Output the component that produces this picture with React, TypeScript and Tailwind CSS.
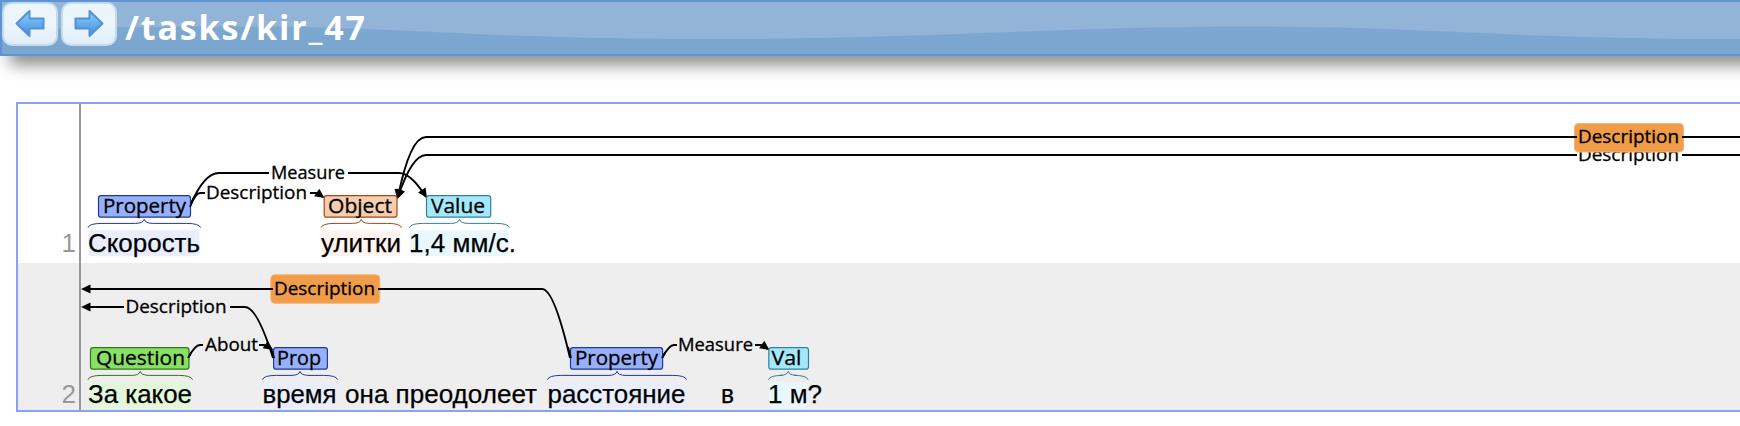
import React from "react";

type Tone = { fill: string; stroke: string; wash: string };

const BLUE: Tone = { fill: "#97b0fa", stroke: "#1f389e", wash: "#e9edfe" };
const PEACH: Tone = { fill: "#f8ccae", stroke: "#a3471a", wash: "#fef3ee" };
const CYAN: Tone = { fill: "#a3e8fb", stroke: "#33809c", wash: "#e9f8fe" };
const GREEN: Tone = { fill: "#88e065", stroke: "#33771c", wash: "#e2f6da" };

type SpanProps = {
  tone: Tone;
  label: string;
  box: [number, number];
  text: [number, number];
  brace: [number, number];
  y: number;
};

function Span({ tone, label, box, text, brace, y }: SpanProps) {
  const [l, r] = brace;
  const m = (l + r) / 2;
  return (
    <g>
      <rect x={l + 0.5} y={y + 34.5} width={r - l - 1.5} height={26} rx={4} fill={tone.wash} />
      <rect x={box[0]} y={y} width={box[1] - box[0]} height={21.5} rx={2.5} fill={tone.fill} stroke={tone.stroke} strokeWidth={1.2} />
      <path
        d={`M${l} ${y + 32}Q${l + 1} ${y + 27.7} ${l + 14} ${y + 27.7}H${m - 9}Q${m - 1} ${y + 27.7} ${m} ${y + 23.7}Q${m + 1} ${y + 27.7} ${m + 9} ${y + 27.7}H${r - 14}Q${r - 1} ${y + 27.7} ${r} ${y + 32}`}
        fill="none"
        stroke={tone.stroke}
      />
      <Label x={text[0]} y={y + 17} w={text[1] - text[0]} size={19.5}>{label}</Label>
    </g>
  );
}

function Label({ x, y, w, size = 18, children }: { x: number; y: number; w: number; size?: number; children: string }) {
  return (
    <text x={x} y={y} textLength={w} lengthAdjust="spacingAndGlyphs" fontSize={size} stroke="#000" strokeWidth={0.3} className="font-['Open_Sans',sans-serif] font-medium">
      {children}
    </text>
  );
}

function Word({ x, y, w, children }: { x: number; y: number; w: number; children: string }) {
  return (
    <text x={x} y={y} textLength={w} lengthAdjust="spacingAndGlyphs" fontSize={26} stroke="#000" strokeWidth={0.25} className="font-['Liberation_Sans',sans-serif]">
      {children}
    </text>
  );
}

function Arrow({ x, y, angle }: { x: number; y: number; angle: number }) {
  return <path d="M0 0L-9.5 -4.5V4.5Z" transform={`translate(${x} ${y}) rotate(${angle})`} />;
}

function Highlight({ x, y }: { x: number; y: number }) {
  return <rect x={x} y={y} width={109} height={28.5} rx={4} fill="#f09c48" stroke="#f4b477" />;
}

const ARC = { fill: "none", stroke: "#000", strokeWidth: 1.9 };

function SentenceOne() {
  return (
    <svg viewBox="81 104 1659 159" className="h-[159px] w-[1659px] shrink-0">
      <g {...ARC}>
        <path d="M190 206Q204 173 219 173H269" />
        <path d="M348 173H399Q411 173 426 197" />
        <path d="M190 206Q196 193 200 193H205" />
        <path d="M310 193H316L323 197" />
        <path d="M398 197Q410 137 426 137H1577M1682 137H1740" />
        <path d="M398 197Q412 155 426 155H1577M1682 155H1740" />
      </g>
      <Arrow x={324.5} y={198} angle={35} />
      <Arrow x={427} y={198} angle={57} />
      <Arrow x={397} y={199} angle={102} />
      <Arrow x={397.5} y={199} angle={110} />
      <Label x={271} y={179} w={74}>Measure</Label>
      <Label x={206} y={199} w={101}>Description</Label>
      <Label x={1578} y={161} w={101}>Description</Label>
      <Highlight x={1574.5} y={123.5} />
      <path d="M1574 137H1577M1682 137H1685" {...ARC} />
      <Label x={1578} y={143} w={101}>Description</Label>
      <Span tone={BLUE} label="Property" box={[98.5, 190.5]} text={[103, 186]} brace={[88, 200.5]} y={195.7} />
      <Span tone={PEACH} label="Object" box={[324.2, 397]} text={[328, 392]} brace={[321, 401.5]} y={195.7} />
      <Span tone={CYAN} label="Value" box={[426.5, 490.7]} text={[431, 485]} brace={[409.5, 509.5]} y={195.7} />
      <path d="M190 207L194 197" {...ARC} />
      <Word x={88} y={252} w={112}>Скорость</Word>
      <Word x={321} y={252} w={80}>улитки</Word>
      <Word x={409} y={252} w={107}>1,4 мм/с.</Word>
    </svg>
  );
}

function SentenceTwo() {
  return (
    <svg viewBox="81 263 1659 147" className="h-[147px] w-[1659px] shrink-0">
      <g {...ARC}>
        <path d="M88 289H542Q554 289 570 358" />
        <path d="M88 307H124M230 307H245Q257 307 273 358" />
        <path d="M188 358Q195 345 200 345H203" />
        <path d="M259 345H264L272 349" />
        <path d="M662 358Q669 345 674 345H677" />
        <path d="M755 345H761L768 349" />
      </g>
      <Arrow x={81} y={289} angle={180} />
      <Arrow x={81} y={307} angle={180} />
      <Arrow x={273} y={350} angle={35} />
      <Arrow x={769.5} y={350} angle={35} />
      <Highlight x={270.8} y={274.8} />
      <path d="M270 289H273M378 289H381" {...ARC} />
      <Label x={274} y={295} w={101}>Description</Label>
      <Label x={125.5} y={313} w={101}>Description</Label>
      <Label x={205} y={351} w={53}>About</Label>
      <Label x={678} y={351} w={75}>Measure</Label>
      <Span tone={GREEN} label="Question" box={[90.5, 189]} text={[96, 185]} brace={[88, 192.5]} y={347.7} />
      <Span tone={BLUE} label="Prop" box={[273.6, 327.4]} text={[277, 321]} brace={[262.5, 337.5]} y={347.7} />
      <Span tone={BLUE} label="Property" box={[570.5, 662.6]} text={[575, 658]} brace={[547.5, 686.5]} y={347.7} />
      <Span tone={CYAN} label="Val" box={[768.8, 808.5]} text={[771.5, 801.5]} brace={[768.5, 808]} y={347.7} />
      <g {...ARC}>
        <path d="M271 348L274 358" />
        <path d="M568 347L571 358" />
        <path d="M188 358L191 353" />
        <path d="M662 358L665 353" />
      </g>
      <Word x={88} y={403} w={104}>За какое</Word>
      <Word x={262.5} y={403} w={74}>время</Word>
      <Word x={345} y={403} w={192}>она преодолеет</Word>
      <Word x={547.5} y={403} w={138}>расстояние</Word>
      <Word x={721} y={403} w={13}>в</Word>
      <Word x={768} y={403} w={54}>1 м?</Word>
    </svg>
  );
}

function NavButton({ flip = false }: { flip?: boolean }) {
  return (
    <button className="flex h-[44px] w-[56px] items-start justify-center rounded-[10px] border-2 border-[#c5dbec] bg-linear-to-b from-[#edf5fc] from-55% to-[#e0edf9] pt-[4px]">
      <svg viewBox="0 0 32 32" className={flip ? "size-[32px] -scale-x-100" : "size-[32px]"}>
        <defs>
          <linearGradient id="arrowFill" x1="0" y1="0" x2="0" y2="1">
            <stop offset="0" stopColor="#8fd0fb" />
            <stop offset="1" stopColor="#3f8edc" />
          </linearGradient>
        </defs>
        <path d="M2.5 15.5L15.5 3V10.5H29.5V20.5H15.5V28Z" fill="url(#arrowFill)" stroke="#5391d8" strokeWidth="2" strokeLinejoin="round" />
      </svg>
    </button>
  );
}

export default function App() {
  return (
    <div className="h-[426px] w-[1740px] overflow-hidden bg-white text-black">
      <header className="relative h-[56px] w-[1780px] border-2 border-[#5c94d5] bg-linear-to-b from-[#80aad2] to-[#79a5ce] shadow-[10px_9px_15px_#8c8c8c]">
        <svg viewBox="2 2 1740 52" className="absolute left-0 top-0 h-[52px] w-[1740px]">
          <path d="M2 2H1742V39C1500 39 1430 26.5 1245 26.5S930 39 706 39S400 26.5 245 26.5S90 28 2 30Z" fill="#92b4d7" />
        </svg>
        <div className="relative flex items-start gap-[3px]">
          <NavButton />
          <NavButton flip />
          <svg viewBox="0 0 250 52" className="ml-[4px] h-[52px] w-[250px]">
            <text x="1" y="38" textLength="240" lengthAdjust="spacing" fontSize="34" fill="#fff" className="font-['Open_Sans',sans-serif] font-bold">/tasks/kir_47</text>
          </svg>
        </div>
      </header>
      <main className="ml-[16px] mt-[46px] w-[1740px] border-2 border-[#87a1f8]">
        <section className="flex h-[159px] bg-white">
          <div className="flex w-[63px] shrink-0 items-end justify-end border-r-2 border-[#999] pb-[2px] pr-[3px] font-['Liberation_Sans',sans-serif] text-[26px] leading-[36px] text-[#999]">1</div>
          <SentenceOne />
        </section>
        <section className="flex h-[147px] bg-[#eee]">
          <div className="flex w-[63px] shrink-0 items-end justify-end border-r-2 border-[#999] pr-[3px] font-['Liberation_Sans',sans-serif] text-[26px] leading-[32px] text-[#999]">2</div>
          <SentenceTwo />
        </section>
      </main>
    </div>
  );
}
